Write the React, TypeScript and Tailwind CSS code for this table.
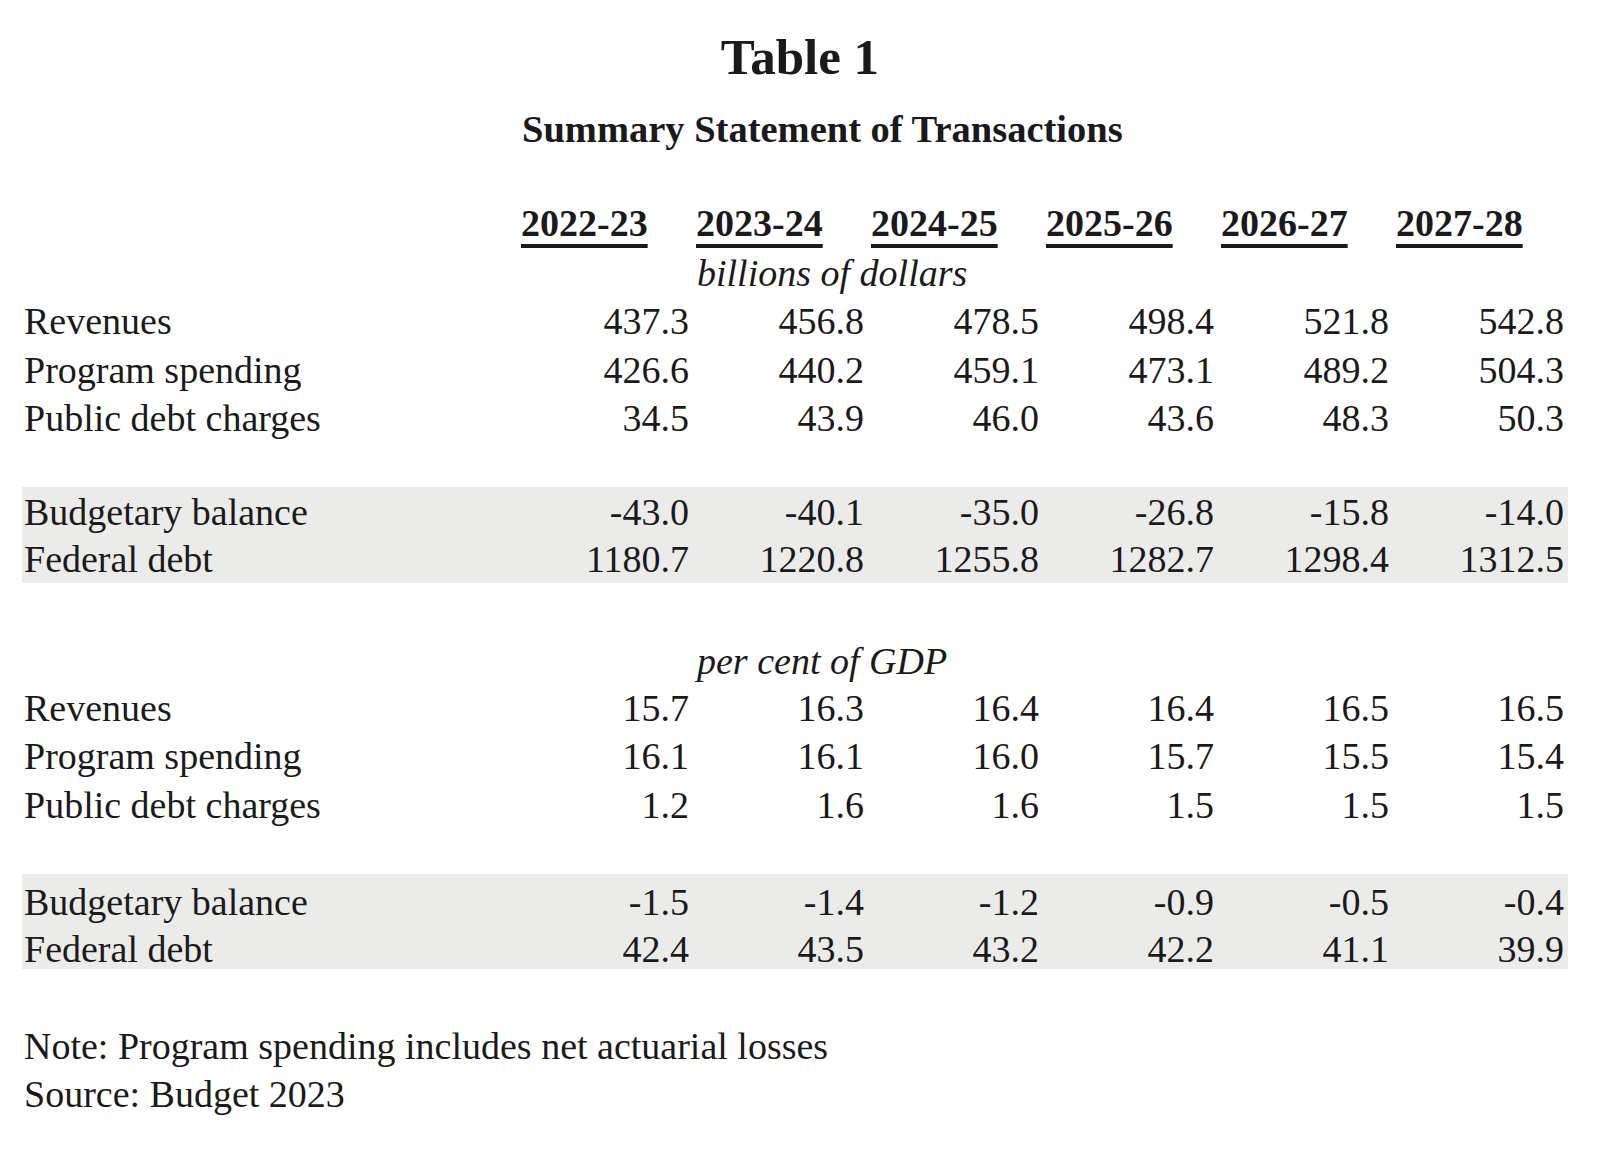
import React from "react";

const years = ["2022-23", "2023-24", "2024-25", "2025-26", "2026-27", "2027-28"];

type Row = { label: string; values: string[] };

const dollarsTop: Row[] = [
  { label: "Revenues", values: ["437.3", "456.8", "478.5", "498.4", "521.8", "542.8"] },
  { label: "Program spending", values: ["426.6", "440.2", "459.1", "473.1", "489.2", "504.3"] },
  { label: "Public debt charges", values: ["34.5", "43.9", "46.0", "43.6", "48.3", "50.3"] },
];
const dollarsBand: Row[] = [
  { label: "Budgetary balance", values: ["-43.0", "-40.1", "-35.0", "-26.8", "-15.8", "-14.0"] },
  { label: "Federal debt", values: ["1180.7", "1220.8", "1255.8", "1282.7", "1298.4", "1312.5"] },
];
const gdpTop: Row[] = [
  { label: "Revenues", values: ["15.7", "16.3", "16.4", "16.4", "16.5", "16.5"] },
  { label: "Program spending", values: ["16.1", "16.1", "16.0", "15.7", "15.5", "15.4"] },
  { label: "Public debt charges", values: ["1.2", "1.6", "1.6", "1.5", "1.5", "1.5"] },
];
const gdpBand: Row[] = [
  { label: "Budgetary balance", values: ["-1.5", "-1.4", "-1.2", "-0.9", "-0.5", "-0.4"] },
  { label: "Federal debt", values: ["42.4", "43.5", "43.2", "42.2", "41.1", "39.9"] },
];

const grid = "grid grid-cols-[490px_repeat(6,175px)] pl-[2px] pr-[2px]";

function DataRow({ row, h }: { row: Row; h: string }) {
  return (
    <div className={`${grid} ${h} items-center`}>
      <div className="whitespace-nowrap">{row.label}</div>
      {row.values.map((v, i) => (
        <div key={i} className="text-right">
          {v}
        </div>
      ))}
    </div>
  );
}

function UnitRow({ text, h }: { text: string; h: string }) {
  return (
    <div className={`${grid} ${h} items-center`}>
      <div />
      <div />
      <div className="col-span-5 pl-[8px] italic whitespace-nowrap">{text}</div>
    </div>
  );
}

export default function App() {
  return (
    <div
      className="w-[1600px] h-[1160px] bg-white text-[#1a1a1a] overflow-hidden"
      style={{ fontFamily: '"Liberation Serif", "Times New Roman", serif' }}
    >
      <div className="h-[28px]" />
      <div className="h-[58px] flex items-center justify-center text-[51px] font-bold leading-none">
        Table 1
      </div>
      <div className="h-[20px]" />
      <div className="ml-[522px] h-[46px] flex items-center text-[38.5px] font-bold leading-none whitespace-nowrap">
        Summary Statement of Transactions
      </div>

      <div className="ml-[22px] w-[1546px] text-[38px] leading-none">
        <div className="h-[46px]" />
        <div className={`${grid} h-[50px] items-center`}>
          <div />
          {years.map((y) => (
            <div key={y} className="pl-[7px] font-bold">
              <span className="underline decoration-[3.5px] underline-offset-[8px]">{y}</span>
            </div>
          ))}
        </div>
        <UnitRow text="billions of dollars" h="h-[49px]" />
        {dollarsTop.map((r) => (
          <DataRow key={r.label} row={r} h="h-[48.5px]" />
        ))}
        <div className="h-[44px]" />
        <div className="bg-[#ebebe9] h-[96px] pt-[2px]">
          {dollarsBand.map((r) => (
            <DataRow key={r.label} row={r} h="h-[47px]" />
          ))}
        </div>
        <div className="h-[56px]" />
        <UnitRow text="per cent of GDP" h="h-[45px]" />
        {gdpTop.map((r) => (
          <DataRow key={r.label} row={r} h="h-[48.5px]" />
        ))}
        <div className="h-[45px]" />
        <div className="bg-[#ebebe9] h-[95px] pt-[4px]">
          {gdpBand.map((r) => (
            <DataRow key={r.label} row={r} h="h-[47px]" />
          ))}
        </div>
        <div className="h-[53px]" />
        <div className="pl-[2px] h-[48px] flex items-center whitespace-nowrap">
          Note: Program spending includes net actuarial losses
        </div>
        <div className="pl-[2px] h-[48px] flex items-center whitespace-nowrap">Source: Budget 2023</div>
      </div>
    </div>
  );
}
